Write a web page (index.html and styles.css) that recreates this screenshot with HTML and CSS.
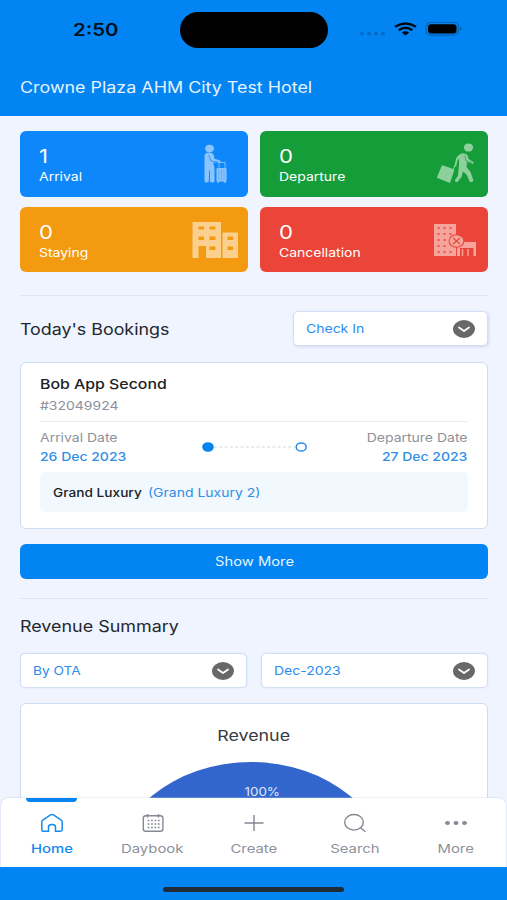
FILE: index.html
```html
<!DOCTYPE html>
<html lang="en">
<head>
<meta charset="utf-8">
<title>Hotel Dashboard</title>
<link rel="stylesheet" href="styles.css">
</head>
<body>
<div class="phone">
  <header class="header">
    <div class="status">
      <span class="clock t">2:50</span>
      <span class="island"></span>
      <svg class="status-icons" width="104" height="18" viewBox="0 0 104 18">
        <g fill="#0568c0"><ellipse cx="3" cy="12.700" rx="2" ry="1.600"/><ellipse cx="10" cy="12.700" rx="2" ry="1.600"/><ellipse cx="17" cy="12.700" rx="2" ry="1.600"/><ellipse cx="24" cy="12.700" rx="2" ry="1.600"/></g>
        <g fill="none" stroke="#000814" stroke-width="2.500"><path d="M36 5.800Q46.500-.8 57 5.800"/><path d="M39.700 9.200Q46.500 4.500 53.300 9.200"/></g>
        <path d="M42.800 11.600Q46.500 8.900 50.200 11.600L46.500 14.600Z" fill="#000814"/>
        <rect x="67" y="1.500" width="32.500" height="12.600" rx="4.500" fill="none" stroke="#0563b6" stroke-width="1.200"/>
        <rect x="69" y="3.200" width="28.500" height="9.300" rx="3" fill="#000"/>
        <path d="M101 5.800q2 .5 2 2t-2 2z" fill="#0563b6"/>
      </svg>
    </div>
    <h1 class="hotel"><span class="t">Crowne Plaza AHM City Test Hotel</span></h1>
  </header>

  <main class="content">
    <section class="stats">
      <div class="stat blue">
        <div class="stat-text"><b class="t">1</b><span class="t">Arrival</span></div>
        <svg width="24" height="40" viewBox="0 0 24 40">
          <ellipse cx="6.500" cy="4.500" rx="4.400" ry="3.800"/>
          <path d="M1.500 12Q1.500 8.500 6 8.500Q10.500 8.500 11 12L11.500 14.800L17.500 16.500V19L10.300 18.200L11.500 25V37.500Q11.500 38.500 9.200 38.500T7 37.500V27L6.200 25.500L5.800 37.500Q5.700 38.500 3.700 38.500T1.500 37.500Z"/>
          <path d="M5.500 11L8 17L16 18.200" fill="none" stroke="#1686fb" stroke-width=".7"/>
          <path d="M16 18V25M22 18V25M15 18.500H22" fill="none" stroke="#8bc4fd" stroke-width=".9"/>
          <rect x="13.500" y="24" width="10" height="13.500" rx="1.200"/>
          <path d="M16 25.500V36M18.500 25.500V36M21 25.500V36" stroke="#4ea4fb" stroke-width=".7"/>
          <path d="M15 37v2M22 37v2" stroke="#8bc4fd" stroke-width="1.500"/>
        </svg>
      </div>
      <div class="stat green">
        <div class="stat-text"><b class="t">0</b><span class="t">Departure</span></div>
        <svg width="38" height="40" viewBox="0 0 38 40">
          <ellipse cx="31.500" cy="4.500" rx="4.600" ry="4.100"/>
          <path d="M17.500 23L19 15.500Q21 11.500 25.500 10.200L29 11Q31.500 12.500 31.500 16L36 18.800Q37 20 36 21L30 19L29.500 24L33.500 29L36.500 37.500Q36 39.300 33 39.300L29.500 31.500L26 28.500L24.500 34L20.500 39Q17.500 39.500 18 37L21 32.500L22 22V15.500L20.500 17.500L19 24Z"/>
          <path d="M28 12.500L29 18L35 20" fill="none" stroke="#17a03a" stroke-width=".7"/>
          <path d="M5.500 23L16.500 27L12.500 39L.800 34.200Z" stroke="#8ed09b" stroke-width="1.600" stroke-linejoin="round"/>
          <path d="M16 27l2-5" stroke="#8ed09b" fill="none"/>
        </svg>
      </div>
      <div class="stat orange">
        <div class="stat-text"><b class="t">0</b><span class="t">Staying</span></div>
        <svg width="46" height="38" viewBox="0 0 46 38">
          <path fill-rule="evenodd" d="M.5 1H29V37H14V25H6.500V37H.5ZM6.500 5.500V8.500H12V5.500ZM17.500 5.500V8.500H23.500V5.500ZM6.500 15.500V19H12V15.500ZM17.500 15.500V19H23.500V15.500ZM17.500 25.500V29H23.500V25.500Z"/>
          <path fill-rule="evenodd" d="M30.500 11.500H46V37H30.500ZM35.500 15.500V19H41V15.500ZM35.500 25.500V29H41V25.500Z"/>
        </svg>
      </div>
      <div class="stat red">
        <div class="stat-text"><b class="t">0</b><span class="t">Cancellation</span></div>
        <svg width="42" height="34" viewBox="0 0 42 34">
          <path d="M0 1H22V33H0Z"/>
          <g fill="#ec5b4f"><path d="M3.500 4h2.200v2h-2.200zM9.500 4h2.200v2h-2.200zM15.500 4h2.200v2h-2.200zM3.500 10h2.200v2h-2.200zM9.500 10h2.200v2h-2.200zM15.500 10h2.200v2h-2.200zM3.500 16h2.200v2h-2.200zM9.500 16h2.200v2h-2.200zM3.500 22h2.200v2h-2.200zM9.500 22h2.200v2h-2.200zM3.500 28h2.200v2h-2.200zM9.500 28h2.200v2h-2.200zM15.500 28h2.200v2h-2.200z"/></g>
          <path d="M25 19H42V33H39.500V25H26V33H23V24Z"/>
          <path d="M28.500 26V33M34 26V33" stroke="#f6a49c" stroke-width="1.500"/>
          <ellipse cx="22.500" cy="18" rx="8" ry="6.700" fill="#e94538"/>
          <ellipse cx="22.500" cy="18" rx="6.900" ry="5.700"/>
          <path d="M19 15L26 21M26 15L19 21" stroke="#e94538" stroke-width="1.100"/>
        </svg>
      </div>
    </section>

    <section class="bookings">
      <div class="row">
        <h2><span class="t">Today's Bookings</span></h2>
        <div class="select checkin"><span class="t">Check In</span>
          <svg width="22" height="18" viewBox="0 0 22 18"><ellipse cx="11" cy="9" rx="11" ry="9" fill="#686868"/><path d="M6 7.500L11 11L16 7.500" fill="none" stroke="#fff" stroke-width="1.800" stroke-linecap="round" stroke-linejoin="round"/></svg>
        </div>
      </div>
      <article class="booking">
        <div class="guest"><span class="t">Bob App Second</span></div>
        <div class="ref"><span class="t">#32049924</span></div>
        <div class="dates">
          <div class="date"><span class="t label">Arrival Date</span><span class="t value">26 Dec 2023</span></div>
          <svg class="route" width="106" height="12" viewBox="0 0 106 12"><path d="M12 6H93" stroke="#d5d8dc" stroke-width="1" stroke-dasharray="3 2.300"/><ellipse cx="6" cy="6" rx="5.800" ry="4.800" fill="#0584ee"/><ellipse cx="99.200" cy="6" rx="5" ry="4.100" fill="#fff" stroke="#278dea" stroke-width="1.500"/></svg>
          <div class="date end"><span class="t label">Departure Date</span><span class="t value">27 Dec 2023</span></div>
        </div>
        <div class="room"><span class="t rname">Grand Luxury</span><span class="t rtype">(Grand Luxury 2)</span></div>
      </article>
      <button class="more"><span class="t">Show More</span></button>
    </section>

    <section class="revenue">
      <h2><span class="t summary">Revenue Summary</span></h2>
      <div class="filters">
        <div class="select"><span class="t ota">By OTA</span>
          <svg width="22" height="18" viewBox="0 0 22 18"><ellipse cx="11" cy="9" rx="11" ry="9" fill="#686868"/><path d="M6 7.500L11 11L16 7.500" fill="none" stroke="#fff" stroke-width="1.800" stroke-linecap="round" stroke-linejoin="round"/></svg>
        </div>
        <div class="select"><span class="t">Dec-2023</span>
          <svg width="22" height="18" viewBox="0 0 22 18"><ellipse cx="11" cy="9" rx="11" ry="9" fill="#686868"/><path d="M6 7.500L11 11L16 7.500" fill="none" stroke="#fff" stroke-width="1.800" stroke-linecap="round" stroke-linejoin="round"/></svg>
        </div>
      </div>
      <div class="chart">
        <h3><span class="t">Revenue</span></h3>
        <div class="pie"><span class="t">100%</span></div>
      </div>
    </section>
  </main>

  <nav class="tabs">
    <a class="tab active">
      <svg width="24" height="20" viewBox="0 0 24 20"><path d="M1.800 9Q1.800 7.800 2.800 7L10.500 1.900Q12 1 13.500 1.900L21.200 7Q22.200 7.800 22.200 9V16.800Q22.200 18.200 20.500 18.200H15.500V14Q15.500 11.500 12 11.500T8.500 14V18.200H3.500Q1.800 18.200 1.800 16.800Z"/></svg>
      <span class="t">Home</span>
    </a>
    <a class="tab">
      <svg width="24" height="20" viewBox="0 0 24 20"><rect x="2.300" y="2.700" width="19.600" height="15.600" rx="2.500"/><path d="M6.500 1V4.500M17.500 1V4.500"/><path d="M6.700 7.500H18.800M6.700 11H18.800M6.700 14.500H18.800" stroke-dasharray="1.700 1.700"/></svg>
      <span class="t wide">Daybook</span>
    </a>
    <a class="tab">
      <svg width="24" height="20" viewBox="0 0 24 20"><path d="M2.500 10H21.500M12 2V18"/></svg>
      <span class="t wide">Create</span>
    </a>
    <a class="tab">
      <svg width="24" height="20" viewBox="0 0 24 20"><ellipse cx="11" cy="9.300" rx="9.300" ry="7.800"/><path d="M17.500 14.800L22.500 18.700"/></svg>
      <span class="t wide">Search</span>
    </a>
    <a class="tab">
      <svg width="24" height="20" viewBox="0 0 24 20"><g fill="#858994" stroke="none"><ellipse cx="3.500" cy="10" rx="2.500" ry="2"/><ellipse cx="12" cy="10" rx="2.500" ry="2"/><ellipse cx="20.500" cy="10" rx="2.500" ry="2"/></g></svg>
      <span class="t wide">More</span>
    </a>
  </nav>
  <footer class="bottom"><span class="home-bar"></span></footer>
</div>
</body>
</html>
```
FILE: styles.css
```css
* { box-sizing: border-box; }
body { margin: 0; font-family: Inter, "Liberation Sans", sans-serif; }
h1, h2, h3 { margin: 0; font-weight: 400; }

.phone {
  width: 507px;
  height: 900px;
  display: flex;
  flex-direction: column;
  overflow: hidden;
  background: #eff4ff;
}

/* Wide lettering: every label is stretched horizontally */
.t {
  display: inline-block;
  white-space: nowrap;
  transform: scaleX(1.165);
  transform-origin: left center;
}

.header { flex: none; height: 116px; background: #0284f2; }
.status {
  height: 58px;
  display: grid;
  grid-template-columns: 180px 148px 1fr;
  align-items: center;
  padding-top: 1px;
}
.clock { margin-left: 73px; font-size: 17px; font-weight: 600; color: #00101f; transform: scaleX(1.2); }
.island { height: 36px; border-radius: 18px; background: #000; }
.status-icons { margin-left: 31px; }
.hotel { padding: 20px 20px 0; font-size: 15.5px; line-height: 20px; color: #e4f3ff; }
.hotel .t { transform: scaleX(1.154); }

.content { flex: 1; min-height: 0; overflow: hidden; padding: 15px 19px 0 20px; }

.stats {
  display: grid;
  grid-template-columns: 228px 228px;
  grid-auto-rows: 65.5px;
  gap: 10px 12px;
  padding-bottom: 23px;
  border-bottom: 1px solid #e0e5f0;
}
.stat { display: flex; justify-content: space-between; border-radius: 6px; padding-left: 19px; color: #fff; }
.stat-text { display: flex; flex-direction: column; align-items: flex-start; padding-top: 13px; }
.stat-text b { font-size: 19px; font-weight: 400; line-height: 25px; }
.stat-text span { font-size: 12px; line-height: 16.5px; }
.blue { background: #0e87fa; }
.green { background: #159d39; }
.orange { background: #f39a10; }
.red { background: #ea4538; }
.blue svg { fill: #8bc4fd; margin: 13px 21px 0 0; }
.green svg { fill: #8ed09b; margin: 12px 13px 0 0; }
.orange svg { fill: #fbd08e; margin: 14px 10px 0 0; }
.red svg { fill: #f6a49c; margin: 16px 12px 0 0; }

.bookings { padding: 15px 0 19px; border-bottom: 1px solid #dce3f1; }
.row { display: flex; justify-content: space-between; align-items: center; }
h2 { font-size: 16px; line-height: 22px; color: #24272e; }
h2 .t { transform: scaleX(1.115); }
h2 .summary { transform: scaleX(1.12); }
.select {
  display: flex;
  justify-content: space-between;
  align-items: center;
  height: 35px;
  padding: 0 12px;
  border: 1px solid #d2ddf6;
  border-radius: 5px;
  background: #fff;
  box-shadow: 0 0 2px #d9e2f7;
  font-size: 12px;
  color: #2b8eef;
}
.select .ota { transform: scaleX(1.14); }
.checkin { width: 195px; box-shadow: 1px 1px 3px #cfd9f0; }

.booking {
  height: 167px;
  margin-top: 16px;
  padding: 11px 19px 0;
  border: 1px solid #cbdcf4;
  border-radius: 6px;
  background: #fff;
}
.guest { font-size: 13.5px; line-height: 20px; font-weight: 500; color: #202226; }
.guest .t { transform: scaleX(1.175); }
.ref { height: 28px; font-size: 12px; line-height: 24px; color: #8d919c; border-bottom: 1px solid #ebecef; }
.dates { display: flex; justify-content: space-between; padding-top: 6px; }
.date { width: 130px; display: flex; flex-direction: column; font-size: 12px; line-height: 19px; align-items: flex-start; }
.date.end { align-items: flex-end; padding-right: 1px; }
.date.end .t { transform-origin: right center; }
.label { color: #8e9199; }
.value { color: #318fe6; font-weight: 500; }
.route { margin: 13px 0 0 1px; }
.room {
  height: 40px;
  margin-top: 6px;
  padding-left: 13px;
  display: grid;
  grid-template-columns: 95px 1fr;
  align-items: center;
  border-radius: 5px;
  background: #f1f9ff;
  font-size: 12px;
}
.room .t { justify-self: start; }
.room .rname { color: #202226; font-weight: 500; transform: scaleX(1.14); }
.rtype { color: #318fe6; }
.more {
  display: block;
  width: 100%;
  height: 35px;
  margin-top: 15px;
  padding: 0;
  border: 0;
  border-radius: 6px;
  background: #0284f2;
  font: 400 12.5px Inter, sans-serif;
  color: #e4f3ff;
}
.more .t, .chart .t, .tab .t { transform-origin: center; }
.more .t { transform: scaleX(1.18); }

.revenue { padding-top: 16px; }
.filters { display: grid; grid-template-columns: 227px 227px; gap: 14px; margin-top: 16px; }
.chart {
  height: 320px;
  margin-top: 15px;
  padding-top: 21px;
  border: 1px solid #cbdcf4;
  border-radius: 6px;
  background: #fff;
  text-align: center;
}
h3 { font-size: 15px; line-height: 22px; color: #383a3e; }
h3 .t { transform: scaleX(1.19); }
.pie {
  width: 280px;
  height: 230px;
  margin: 15px 0 0 90px;
  padding: 25px 0 0 23px;
  border-radius: 50%;
  background: #3366cc;
  font-size: 11.5px;
  line-height: 11px;
  color: #dce6fa;
}
.pie .t { display: block; width: max-content; margin: 0 auto; }

.tabs {
  flex: none;
  height: 69px;
  margin: 0 1px;
  display: grid;
  grid-template-columns: repeat(5, 101px);
  border-radius: 8px 8px 0 0;
  background: #fff;
  box-shadow: 0 0 2px #c9cedb;
}
.tab { display: flex; flex-direction: column; align-items: center; color: #8e919b; font-size: 12px; line-height: 18px; }
.tab svg { margin: 15px 0 7px; fill: none; stroke: #858994; stroke-width: 1.4; }
.tab .wide { transform: scaleX(1.24); }
.tab.active { color: #168aef; font-weight: 500; }
.tab.active .t { transform: scaleX(1.24); }
.tab.active::before { content: ""; width: 51px; height: 4px; border-radius: 0 0 5px 5px; background: #0584ee; }
.tab.active svg { margin-top: 11px; stroke: #168aef; stroke-width: 1.5; }

.bottom { flex: none; height: 33px; padding-top: 20px; background: #0284f2; }
.home-bar { display: block; width: 181px; height: 5px; margin-left: 163px; border-radius: 3px; background: #202b38; }
```
